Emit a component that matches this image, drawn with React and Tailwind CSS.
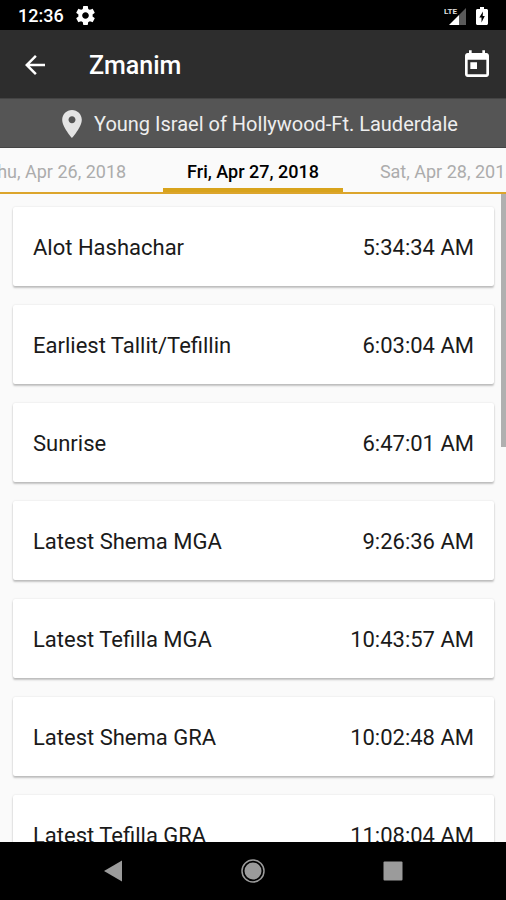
const days = [
  { id: "prev", label: "Thu, Apr 26, 2018" },
  { id: "current", label: "Fri, Apr 27, 2018" },
  { id: "next", label: "Sat, Apr 28, 2018" },
]

const zmanim = [
  { id: 1, name: "Alot Hashachar", time: "5:34:34 AM" },
  { id: 2, name: "Earliest Tallit/Tefillin", time: "6:03:04 AM" },
  { id: 3, name: "Sunrise", time: "6:47:01 AM" },
  { id: 4, name: "Latest Shema MGA", time: "9:26:36 AM" },
  { id: 5, name: "Latest Tefilla MGA", time: "10:43:57 AM" },
  { id: 6, name: "Latest Shema GRA", time: "10:02:48 AM" },
  { id: 7, name: "Latest Tefilla GRA", time: "11:08:04 AM" },
]

function StatusBar() {
  return (
    <div className="flex h-[30px] shrink-0 items-center justify-between bg-black px-[18px] pt-px text-white">
      <div className="flex items-center gap-3">
        <span className="text-[18px] leading-6 font-medium">12:36</span>
        {/* Settings gear */}
        <svg viewBox="2 2 20 20" className="h-[19px] w-[19px]" fill="currentColor" aria-hidden="true">
          <path d="M19.43 12.98c.04-.32.07-.64.07-.98s-.03-.66-.07-.98l2.11-1.65c.19-.15.24-.42.12-.64l-2-3.46c-.12-.22-.39-.3-.61-.22l-2.49 1c-.52-.4-1.08-.73-1.69-.98l-.38-2.65C14.46 2.18 14.25 2 14 2h-4c-.25 0-.46.18-.49.42l-.38 2.65c-.61.25-1.17.59-1.69.98l-2.49-1c-.23-.09-.49 0-.61.22l-2 3.46c-.13.22-.07.49.12.64l2.11 1.65c-.04.32-.07.65-.07.98s.03.66.07.98l-2.11 1.65c-.19.15-.24.42-.12.64l2 3.46c.12.22.39.3.61.22l2.49-1c.52.4 1.08.73 1.69.98l.38 2.65c.03.24.24.42.49.42h4c.25 0 .46-.18.49-.42l.38-2.65c.61-.25 1.17-.59 1.69-.98l2.49 1c.23.09.49 0 .61-.22l2-3.46c.12-.22.07-.49-.12-.64l-2.11-1.65zM12 15.5c-1.93 0-3.5-1.57-3.5-3.5s1.57-3.5 3.5-3.5 3.5 1.57 3.5 3.5-1.57 3.5-3.5 3.5z" />
        </svg>
      </div>

      <div className="flex items-center gap-2">
        {/* LTE signal */}
        <svg viewBox="0 0 24 20" className="h-5 w-6" aria-hidden="true">
          <path d="M15 9 22 2v17h-7z" fill="#5a5a5a" />
          <path d="M5 19 15 9v10z" fill="#fff" />
          <text x="0" y="8" fontSize="8" fontWeight="700" fill="#e0e0e0">
            LTE
          </text>
        </svg>
        {/* Charging battery */}
        <svg viewBox="0 0 12 20" className="h-5 w-3" aria-hidden="true">
          <path d="M4 1h4v2h2.500c.8 0 1.500.7 1.500 1.500v13c0 .8-.7 1.500-1.500 1.500h-9C.7 19 0 18.300 0 17.500v-13C0 3.700.7 3 1.500 3H4z" fill="#fff" />
          <path d="M7 5.500 3.300 11.500h2.200V16.500L8.800 10H6.700z" fill="#000" />
        </svg>
      </div>
    </div>
  )
}

function Toolbar() {
  return (
    <header className="flex h-[68px] shrink-0 items-center bg-[#2d2d2d] px-[15px] pt-0.5 text-white">
      <button type="button" aria-label="Back" className="flex h-10 w-10 items-center justify-center">
        <svg viewBox="4 4 16 16" className="h-5 w-5" fill="currentColor" aria-hidden="true">
          <path d="M20 11H7.830l5.590-5.590L12 4l-8 8 8 8 1.410-1.410L7.830 13H20v-2z" />
        </svg>
      </button>
      <h1 className="flex-1 pt-0.5 pl-[34px] text-[25px] leading-8 font-medium">Zmanim</h1>
      <button type="button" aria-label="Today" className="flex h-7 w-7 items-center justify-center">
        <svg viewBox="0 0 24 24" className="h-8 w-8 shrink-0" fill="currentColor" aria-hidden="true">
          <path d="M19 3h-1V1h-2v2H8V1H6v2H5c-1.110 0-1.990.9-1.990 2L3 19c0 1.100.89 2 2 2h14c1.100 0 2-.9 2-2V5c0-1.100-.9-2-2-2zm0 16H5V8h14v11zM7 10h5v5H7z" />
        </svg>
      </button>
    </header>
  )
}

function LocationBar() {
  return (
    <div className="flex h-[50px] shrink-0 items-center justify-center gap-3 border-t border-b border-t-[#444] border-b-[#444] bg-[#555] pt-0.5 pl-[14px] text-[#eee]">
      <svg viewBox="5 2 14 20" className="h-7 w-5" fill="#e4e4e4" aria-hidden="true">
        <path d="M12 2C8.130 2 5 5.130 5 9c0 5.250 7 13 7 13s7-7.750 7-13c0-3.870-3.130-7-7-7zm0 9.500c-1.380 0-2.500-1.120-2.500-2.500s1.120-2.500 2.500-2.500 2.500 1.120 2.500 2.500-1.120 2.500-2.500 2.500z" />
      </svg>
      <span className="text-[20px] leading-6">Young Israel of Hollywood-Ft. Lauderdale</span>
    </div>
  )
}

function DayTabs() {
  const [prev, current, next] = days

  return (
    <nav className="grid h-[46px] shrink-0 grid-cols-[1fr_auto_1fr] overflow-hidden border-b-2 border-[#dca52c] text-[18px] leading-6 whitespace-nowrap">
      <button type="button" className="flex min-w-0 items-center justify-end pt-1 pr-[37px] text-[#acacac]">
        {prev.label}
      </button>
      <button type="button" aria-current="date" className="border-b-4 border-[#d8a31c] px-6 pt-2 font-medium text-black">
        {current.label}
      </button>
      <button type="button" className="flex min-w-0 items-center justify-start pt-1 pl-[37px] text-[#acacac]">
        {next.label}
      </button>
    </nav>
  )
}

function NavBar() {
  return (
    <nav className="flex h-[58px] shrink-0 items-center justify-center gap-28 bg-black">
      <button type="button" aria-label="Back">
        <svg viewBox="0 0 28 28" className="h-7 w-7" aria-hidden="true">
          <path d="M23 3.500v21L5 14z" fill="#9b9b9b" />
        </svg>
      </button>
      <button type="button" aria-label="Home">
        <svg viewBox="0 0 28 28" className="h-7 w-7" aria-hidden="true">
          <circle cx="14" cy="14" r="11" fill="none" stroke="#9b9b9b" strokeWidth="1.500" />
          <circle cx="14" cy="14" r="8.500" fill="#9b9b9b" />
        </svg>
      </button>
      <button type="button" aria-label="Recent apps">
        <svg viewBox="0 0 28 28" className="h-7 w-7" aria-hidden="true">
          <rect x="4.500" y="4.500" width="19" height="19" rx="1" fill="#9b9b9b" />
        </svg>
      </button>
    </nav>
  )
}

export default function App() {
  return (
    <div className="flex h-screen flex-col overflow-hidden bg-[#fafafa] font-['Roboto',sans-serif]">
      <StatusBar />
      <Toolbar />
      <LocationBar />
      <DayTabs />

      <main className="relative min-h-0 flex-1 overflow-hidden">
        <ul className="flex flex-col gap-[19px] pt-[13px] pr-3 pl-[13px]">
          {zmanim.map((zman) => (
            <li
              key={zman.id}
              className="flex h-[79px] items-center justify-between rounded-xs bg-white px-5 pt-0.5 text-[22px] leading-7 text-[#1a1a1a] shadow-[0_2px_2px_rgba(0,0,0,0.22),0_0_2px_rgba(0,0,0,0.12)]"
            >
              <span>{zman.name}</span>
              <span>{zman.time}</span>
            </li>
          ))}
        </ul>

        {/* Scroll position indicator */}
        <div className="absolute top-0 right-0 h-[253px] w-[5px] bg-[#b0b0b0]" />
      </main>

      <NavBar />
    </div>
  )
}
